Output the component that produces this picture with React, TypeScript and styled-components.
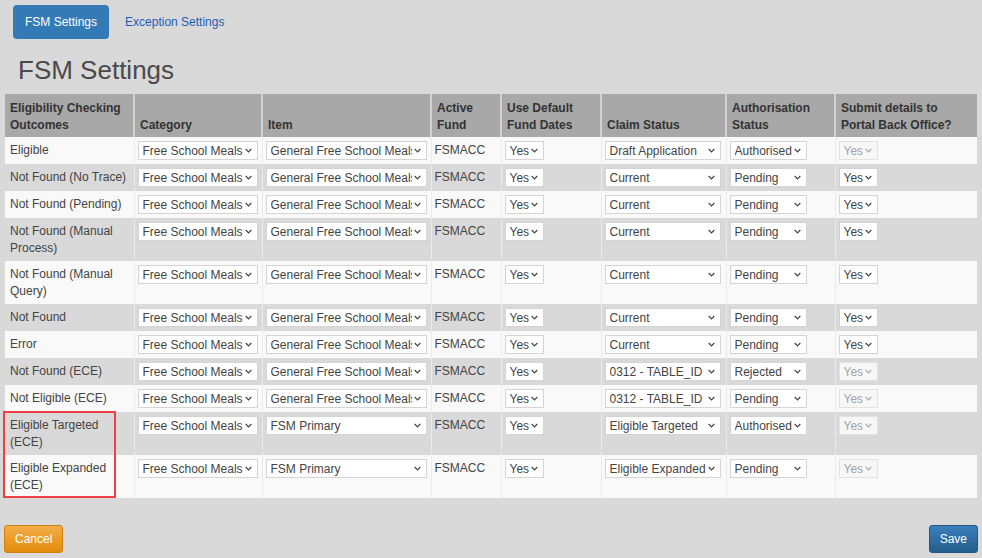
import React from 'react';
import styled, { createGlobalStyle } from 'styled-components';

const GlobalStyle = createGlobalStyle`
  html, body {
    margin: 0;
    padding: 0;
    background: #d9d9d9;
  }
  body {
    font-family: 'Liberation Sans', Arial, sans-serif;
    font-size: 12px;
    color: #444;
  }
`;

const Page = styled.div`
  width: 982px;
  height: 558px;
  box-sizing: border-box;
  padding: 5px 4px 0;
  display: flex;
  flex-direction: column;
`;

const Nav = styled.nav`
  display: flex;
  align-items: center;
  gap: 4px;
  padding-left: 9px;
`;

const NavPill = styled.a<{ $active?: boolean }>`
  display: block;
  padding: 8px 12px;
  line-height: 18px;
  font-size: 12px;
  border-radius: 4px;
  text-decoration: none;
  cursor: pointer;
  color: ${p => (p.$active ? '#fff' : '#1d5bb8')};
  background: ${p => (p.$active ? '#337ab7' : 'transparent')};
`;

const Title = styled.h1`
  margin: 16px 0 8px 14px;
  font-size: 26px;
  line-height: 31px;
  font-weight: normal;
  color: #4a4a4a;
`;

const TableWrap = styled.div`
  position: relative;
  margin: 0 1px;
`;

const Table = styled.table`
  width: 972px;
  table-layout: fixed;
  border-collapse: collapse;
  border-spacing: 0;
`;

const Th = styled.th`
  background: #a8a8a8;
  color: #333;
  font-weight: bold;
  font-size: 12px;
  line-height: 17px;
  text-align: left;
  vertical-align: bottom;
  padding: 6px 5px 3px;
  border-left: 2px solid #d2d2d2;

  &:first-child {
    border-left: none;
  }
`;

const Row = styled.tr<{ $striped: boolean }>`
  background: ${p => (p.$striped ? '#d9d9d9' : '#f9f9f9')};
`;

const Td = styled.td`
  vertical-align: top;
  padding: 5px 4px 4px 3px;
  line-height: 17px;
  color: #444;
  border-left: 1px solid #ebebeb;

  &:first-child {
    border-left: none;
    padding-left: 5px;
  }
`;

const Select = styled.span<{ $width: number; $disabled?: boolean }>`
  display: flex;
  align-items: center;
  box-sizing: border-box;
  width: ${p => p.$width}px;
  height: 19px;
  margin-top: -1px;
  padding: 0 5px 0 4px;
  gap: 2px;
  background: ${p => (p.$disabled ? '#f7f7f7' : '#fff')};
  border: 1px solid ${p => (p.$disabled ? '#e2e2e2' : '#d4d4d4')};
  color: ${p => (p.$disabled ? '#a3a3a3' : '#444')};
  font-size: 12px;
  line-height: 16px;
`;

const SelectText = styled.span`
  flex: 1;
  overflow: hidden;
  white-space: nowrap;
`;

const Chevron = styled.svg`
  flex-shrink: 0;
  width: 7px;
  height: 5px;
`;

const Highlight = styled.div`
  position: absolute;
  left: -2px;
  top: 317px;
  width: 113px;
  height: 87px;
  box-sizing: border-box;
  border: 2px solid #ef4048;
  pointer-events: none;
`;

const Footer = styled.div`
  display: flex;
  justify-content: space-between;
  margin-top: 27px;
`;

const Button = styled.button<{ $variant: 'warning' | 'primary' }>`
  font-family: 'Liberation Sans', Arial, sans-serif;
  font-size: 12px;
  line-height: 18px;
  padding: 4px 10px;
  border-radius: 3px;
  color: #fff;
  cursor: pointer;
  ${p =>
    p.$variant === 'warning'
      ? `
    background: linear-gradient(to bottom, #f2ad48 0%, #e38c0c 100%);
    border: 1px solid #d0820e;
  `
      : `
    background: linear-gradient(to bottom, #3a80bd 0%, #255c8c 100%);
    border: 1px solid #245580;
  `}
`;

function Dropdown({ value, width, disabled }: { value: string; width: number; disabled?: boolean }) {
  return (
    <Select $width={width} $disabled={disabled}>
      <SelectText>{value}</SelectText>
      <Chevron viewBox="0 0 8 5">
        <path d="M0.8 0.8 L4 4 L7.2 0.8" fill="none" stroke={disabled ? '#aaa' : '#444'} strokeWidth="1.4" />
      </Chevron>
    </Select>
  );
}

interface Outcome {
  name: string;
  item: string;
  claim: string;
  auth: string;
  submitLocked: boolean;
}

const GENERAL = 'General Free School Meals';

const outcomes: Outcome[] = [
  { name: 'Eligible', item: GENERAL, claim: 'Draft Application', auth: 'Authorised', submitLocked: true },
  { name: 'Not Found (No Trace)', item: GENERAL, claim: 'Current', auth: 'Pending', submitLocked: false },
  { name: 'Not Found (Pending)', item: GENERAL, claim: 'Current', auth: 'Pending', submitLocked: false },
  { name: 'Not Found (Manual Process)', item: GENERAL, claim: 'Current', auth: 'Pending', submitLocked: false },
  { name: 'Not Found (Manual Query)', item: GENERAL, claim: 'Current', auth: 'Pending', submitLocked: false },
  { name: 'Not Found', item: GENERAL, claim: 'Current', auth: 'Pending', submitLocked: false },
  { name: 'Error', item: GENERAL, claim: 'Current', auth: 'Pending', submitLocked: false },
  { name: 'Not Found (ECE)', item: GENERAL, claim: '0312 - TABLE_ID', auth: 'Rejected', submitLocked: true },
  { name: 'Not Eligible (ECE)', item: GENERAL, claim: '0312 - TABLE_ID', auth: 'Pending', submitLocked: true },
  { name: 'Eligible Targeted (ECE)', item: 'FSM Primary', claim: 'Eligible Targeted', auth: 'Authorised', submitLocked: true },
  { name: 'Eligible Expanded (ECE)', item: 'FSM Primary', claim: 'Eligible Expanded', auth: 'Pending', submitLocked: true },
];

const columnWidths = [129, 128, 169, 70, 100, 125, 109, 142];

export default function App() {
  return (
    <>
      <GlobalStyle />
      <Page>
        <Nav>
          <NavPill $active>FSM Settings</NavPill>
          <NavPill>Exception Settings</NavPill>
        </Nav>

        <Title>FSM Settings</Title>

        <TableWrap>
          <Table>
            <colgroup>
              {columnWidths.map((w, i) => (
                <col key={i} style={{ width: w }} />
              ))}
            </colgroup>
            <thead>
              <tr>
                <Th>Eligibility Checking<br />Outcomes</Th>
                <Th>Category</Th>
                <Th>Item</Th>
                <Th>Active<br />Fund</Th>
                <Th>Use Default<br />Fund Dates</Th>
                <Th>Claim Status</Th>
                <Th>Authorisation<br />Status</Th>
                <Th>Submit details to<br />Portal Back Office?</Th>
              </tr>
            </thead>
            <tbody>
              {outcomes.map((o, i) => (
                <Row key={o.name} $striped={i % 2 === 1}>
                  <Td>{o.name}</Td>
                  <Td><Dropdown value="Free School Meals" width={120} /></Td>
                  <Td><Dropdown value={o.item} width={161} /></Td>
                  <Td>FSMACC</Td>
                  <Td><Dropdown value="Yes" width={39} /></Td>
                  <Td><Dropdown value={o.claim} width={116} /></Td>
                  <Td><Dropdown value={o.auth} width={77} /></Td>
                  <Td><Dropdown value="Yes" width={39} disabled={o.submitLocked} /></Td>
                </Row>
              ))}
            </tbody>
          </Table>
          <Highlight />
        </TableWrap>

        <Footer>
          <Button $variant="warning">Cancel</Button>
          <Button $variant="primary">Save</Button>
        </Footer>
      </Page>
    </>
  );
}
